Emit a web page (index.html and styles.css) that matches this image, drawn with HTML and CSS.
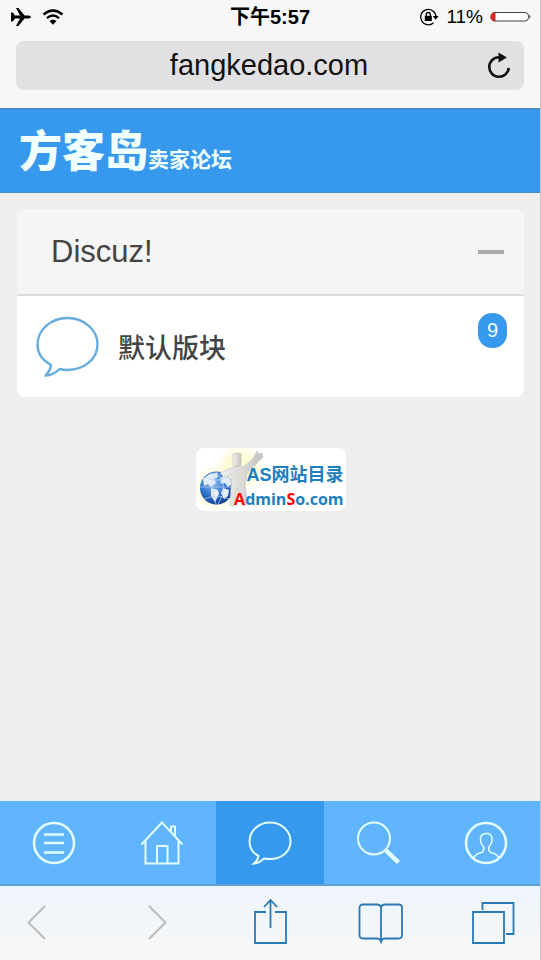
FILE: index.html
```html
<!DOCTYPE html>
<html lang="zh-CN">
<head>
    <meta charset="UTF-8">
    <meta name="viewport" content="width=device-width, initial-scale=1.0">
    <title>方客岛 卖家论坛</title>
    <link rel="stylesheet" href="styles.css">
</head>
<body>
    <div class="browser-top">
        <div class="status-bar">
            <div class="status-left">
                <svg width="22" height="20" viewBox="0 0 22 20" aria-hidden="true">
                    <path d="M1 5.500h1.800L5 8.400h5L6 1h2.400l6.200 7.400H19q4 1.600 0 3.200h-4.400L8.400 19H6l4-7.400H5l-2.200 2.900H1z"/>
                </svg>
                <svg width="22" height="18" viewBox="0 0 22 18" fill="none" stroke="#000" stroke-width="2.400" aria-hidden="true">
                    <path d="M1.500 6.500Q11-1.500 20.500 6.500M5 10.200Q11 5 17 10.200"/>
                    <path d="M7.500 13Q11 9.800 14.500 13L11 16.800z" fill="#000" stroke="none"/>
                </svg>
            </div>
            <div class="status-time">下午5:57</div>
            <div class="status-right">
                <svg width="20" height="20" viewBox="0 0 20 20" fill="none" stroke="#000" stroke-width="1.300" aria-hidden="true">
                    <path d="M14.500 15.800A7.700 7.700 0 1 1 17 10"/>
                    <path d="M13.800 9h5.800l-2.900 3.800z" fill="#000" stroke="none"/>
                    <rect x="5.800" y="8.800" width="7" height="5.200" fill="#000" stroke="none"/>
                    <path d="M7.300 9V7.500a2 2 0 0 1 4 0V9"/>
                </svg>
                <span class="battery-text">11%</span>
                <svg width="42" height="12" viewBox="0 0 42 12" aria-hidden="true">
                    <rect x="1.500" y="1.500" width="37" height="8.500" rx="3.500" fill="#fff" stroke="#444"/>
                    <path d="M5 1.500a3.500 3.500 0 0 0 0 8.500z" fill="#e3281e" stroke="#a33"/>
                    <path d="M39.500 3.500q2 2.200 0 4.500z" fill="#333"/>
                </svg>
            </div>
        </div>
        <div class="address-bar">
            <input class="address-input" type="text" value="fangkedao.com" aria-label="地址">
            <button class="reload-btn" aria-label="刷新">
                <svg width="26" height="28" viewBox="0 0 26 28" fill="none" stroke="#111" stroke-width="2.600" aria-hidden="true">
                    <path d="M14 5.200h-1A9.800 9.800 0 1 0 22.800 16"/>
                    <path d="M12.500.500l8.500 5-8.500 5z" fill="#111" stroke="none"/>
                </svg>
            </button>
        </div>
    </div>

    <header class="header">
        <a class="logo" href="#"><span class="logo-name">方客岛</span><span class="logo-sub">卖家论坛</span></a>
    </header>

    <main class="content">
        <section class="forum">
            <div class="forum-header">
                <h2>Discuz!</h2>
                <button class="toggle-btn" aria-label="收起"></button>
            </div>
            <a class="forum-row" href="#">
                <svg class="forum-icon" width="64" height="62" viewBox="0 0 64 62" fill="none" stroke="#65addf" stroke-width="2.400" stroke-linejoin="round" aria-hidden="true">
                    <path d="M15 49C6 44 1.500 37 1.500 29 1.500 14 14.500 2 31.500 2S61.500 14 61.500 28.500 48 54 31.500 54q-4 0-8-1c-4 4-8 6.500-14 6.500 3.500-3.500 5-6.500 5.500-10.500z"/>
                </svg>
                <span class="forum-name">默认版块</span>
                <span class="badge">9</span>
            </a>
        </section>

        <div class="site-mark">
            <svg class="mark-art" width="74" height="63" viewBox="0 0 74 63" aria-hidden="true">
                <defs>
                    <radialGradient id="globe" cx="40%" cy="32%" r="70%">
                        <stop offset="0" stop-color="#8ebcf2"/>
                        <stop offset=".6" stop-color="#2e6fca"/>
                        <stop offset="1" stop-color="#123e91"/>
                    </radialGradient>
                    <radialGradient id="glow">
                        <stop offset=".6" stop-color="#fdfad6"/>
                        <stop offset="1" stop-color="#fdfad6" stop-opacity="0"/>
                    </radialGradient>
                    <linearGradient id="figure">
                        <stop offset="0" stop-color="#f3f1ee"/>
                        <stop offset="1" stop-color="#c4c2be"/>
                    </linearGradient>
                </defs>
                <ellipse cx="20" cy="40" rx="22" ry="24" fill="url(#glow)"/>
                <ellipse cx="44" cy="21" rx="25" ry="24" fill="url(#glow)"/>
                <circle cx="20.500" cy="40" r="16.500" fill="url(#globe)"/>
                <path d="M7 31q7-7 14-6l1 4-4 2 2 4-5 4-3-3-4 2zM15 40l7 2 1 4-4 8-4-6zM26 25q8 2 10 11l-4 3-3-4-4 1-1-5 3-3zM27 40l6 2-1 6-4 3-3-6z" fill="#e4eef9"/>
                <path d="M4 39h33M20 24q-7 15 0 32M21 24q13 15 1 32M8 29q13 6 25 0M8 51q13-5 25 0" fill="none" stroke="#bad5f1" stroke-width=".7"/>
                <path d="M37 19q6-2 10 0l9-7 3-5 2-4 1 3 4-1 1 4-4 4-12 12-2 12 3 19-5 2-6-18-3 18h-4l1-19 1-13q-5 4-9 2l-3-3z" fill="url(#figure)" stroke="#c5c3bf" stroke-width=".6"/>
                <path d="M37 6q4-2 8 0v11q-4 2-8 0z" fill="url(#figure)" stroke="#bbb9b5" stroke-width=".6"/>
            </svg>
            <div class="mark-text">
                <p class="mark-title">AS网站目录</p>
                <p class="mark-domain"><em>A</em>dmin<em>S</em>o.com</p>
            </div>
        </div>
    </main>

    <nav class="tab-bar">
        <a class="tab" href="#" aria-label="菜单">
            <svg width="44" height="44" viewBox="0 0 44 44" aria-hidden="true">
                <circle cx="22" cy="22" r="20" stroke-width="2.600"/>
                <path d="M12 13.500h20M12 22h20M12 31.500h20" stroke-width="2.400"/>
            </svg>
        </a>
        <a class="tab" href="#" aria-label="首页">
            <svg width="44" height="44" viewBox="0 0 44 44" aria-hidden="true">
                <path d="M1.500 23.500L22 1.500l20.500 22M5.500 20v22.500h33V20M17 42V25h10.500v17M31 10V5.500h4V14.500"/>
            </svg>
        </a>
        <a class="tab active" href="#" aria-label="论坛">
            <svg width="44" height="44" viewBox="0 0 44 44" aria-hidden="true">
                <path d="M10.500 35C4 31.500 1.500 26 1.500 20.500 1.500 10 10.500 1.500 22 1.500s20.500 8.500 20.500 19S33 38 22 38q-3 0-6-.5c-3 3-5.500 4.500-10 5 3-2.500 4-4.500 4.500-7.500z"/>
            </svg>
        </a>
        <a class="tab" href="#" aria-label="搜索">
            <svg width="44" height="44" viewBox="0 0 44 44" aria-hidden="true">
                <circle cx="18" cy="17.500" r="16"/>
                <path d="M29 28.500L42.500 41.500" stroke-width="4.500"/>
            </svg>
        </a>
        <a class="tab" href="#" aria-label="我的">
            <svg width="44" height="44" viewBox="0 0 44 44" aria-hidden="true">
                <circle cx="22" cy="22" r="20" stroke-width="2.600"/>
                <path stroke-width="1.600" d="M9.500 37q2-4 8-5.500 3-1 2-5.500-2.500-2.500-3-6.500-1-6.500 5.500-7t6 7q-.5 4-3 6.500-1 4.500 2 5.500 6 1.500 8 5.500"/>
            </svg>
        </a>
    </nav>

    <div class="browser-bottom">
        <button class="tool" aria-label="后退" disabled>
            <svg width="46" height="46" viewBox="0 0 46 46" aria-hidden="true">
                <path d="M27 6L10.500 22.500 27 39" stroke-width="2"/>
            </svg>
        </button>
        <button class="tool" aria-label="前进" disabled>
            <svg width="46" height="46" viewBox="0 0 46 46" aria-hidden="true">
                <path d="M18 6l16.500 16.500L18 39" stroke-width="2"/>
            </svg>
        </button>
        <button class="tool" aria-label="分享">
            <svg width="46" height="46" viewBox="0 0 46 46" aria-hidden="true">
                <path d="M22 12H11v31h31V12H31M26.500 28V0M20 7l6.500-7L33 7"/>
            </svg>
        </button>
        <button class="tool" aria-label="书签">
            <svg width="46" height="46" viewBox="0 0 46 46" aria-hidden="true">
                <path d="M24 7q-1-2.500-4-2.500H6Q2.500 4.500 2.500 8v27q0 3.500 3.500 3.500h14q3 0 4 3 1-3 4-3h13.500q3.500 0 3.500-3.500V8q0-3.500-3.500-3.500H28Q25 4.500 24 7zv36"/>
            </svg>
        </button>
        <button class="tool" aria-label="标签页">
            <svg width="46" height="46" viewBox="0 0 46 46" aria-hidden="true">
                <path d="M3 12h31v31H3zM12.500 10V3h31v31H36"/>
            </svg>
        </button>
    </div>
</body>
</html>
```
FILE: styles.css
```css
* {
    box-sizing: border-box;
    margin: 0;
    padding: 0;
}

body {
    display: flex;
    flex-direction: column;
    min-height: 100vh;
    font-family: "Liberation Sans", "Noto Sans CJK SC", sans-serif;
    color: #444;
    background: #eee;
    border-right: 1px solid #c4c4c6;
}

a {
    color: inherit;
    text-decoration: none;
}

button {
    border: none;
    background: none;
    cursor: pointer;
}

svg {
    display: block;
}

/* browser chrome */
.browser-top {
    padding: 0 16px 18px;
    background: #f7f7f7;
}

.status-bar {
    display: grid;
    grid-template-columns: 1fr auto 1fr;
    align-items: center;
    height: 34px;
    margin: 0 -8px 7px;
    color: #000;
}

.status-left,
.status-right {
    display: flex;
    align-items: center;
}

.status-left {
    gap: 10px;
    padding-left: 2px;
}

.status-right {
    justify-content: flex-end;
    gap: 7px;
}

.status-time {
    font-size: 20px;
    font-weight: bold;
    line-height: 34px;
}

.battery-text {
    font-size: 19px;
    line-height: 34px;
}

.address-bar {
    display: flex;
    align-items: center;
    height: 49px;
    padding: 0 12px;
    background: #e1e1e4;
    border-radius: 8px;
}

.address-input {
    flex: 1;
    min-width: 0;
    height: 49px;
    padding-left: 24px;
    border: none;
    outline: none;
    background: none;
    font-family: inherit;
    font-size: 29px;
    text-align: center;
    color: #111;
}

/* site header */
.header {
    height: 85px;
    padding: 0 19px;
    background: #3699ed;
    border-top: 2px solid #458dc6;
    border-bottom: 1px solid #458dc6;
}

.logo {
    display: flex;
    align-items: baseline;
    font-family: "Noto Sans CJK SC", sans-serif;
    font-weight: 900;
    line-height: 76px;
    color: #f0ffff;
}

.logo-name {
    font-size: 43px;
}

.logo-sub {
    font-size: 21px;
    font-weight: bold;
}

/* forum list */
.content {
    flex: 1;
    padding: 16px 16px 16px 17px;
}

.forum {
    overflow: hidden;
    border-radius: 8px;
    background: #fff;
}

.forum-header {
    display: flex;
    align-items: center;
    justify-content: space-between;
    height: 87px;
    padding: 0 20px 0 34px;
    background: #f5f5f5;
    border-bottom: 2px solid #dcdcdc;
}

.forum-header h2 {
    font-size: 31px;
    font-weight: normal;
}

.toggle-btn {
    width: 26px;
    height: 4px;
    background: #aaa;
}

.forum-row {
    display: flex;
    align-items: center;
    height: 101px;
    padding: 0 17px 0 19px;
}

.forum-name {
    flex: 1;
    padding-left: 18px;
    font-size: 27px;
    font-weight: 500;
}

.badge {
    align-self: flex-start;
    width: 29px;
    margin-top: 17px;
    border-radius: 14px;
    background: #3699ed;
    font-size: 20px;
    line-height: 35px;
    text-align: center;
    color: #f0ffff;
}

.site-mark {
    position: relative;
    width: 150px;
    height: 63px;
    margin: 51px auto 0;
    overflow: hidden;
    border-radius: 8px;
    background: #fff;
}

.mark-art {
    position: absolute;
    top: 0;
    left: 0;
}

.mark-text {
    position: relative;
    padding: 15px 2px 0 0;
    font-weight: bold;
    line-height: 24px;
    text-align: right;
    white-space: nowrap;
    color: #1b80bd;
}

.mark-title {
    font-family: "Liberation Sans", "Noto Sans CJK SC", sans-serif;
    font-size: 18px;
}

.mark-domain {
    font-family: "Open Sans", sans-serif;
    font-size: 16px;
}

.mark-domain em {
    font-style: normal;
    color: #f00;
}

/* bottom navigation */
.tab-bar {
    display: flex;
    height: 85px;
    background: #60b5fe;
    border-bottom: 2px solid #5c9fd9;
}

.tab {
    display: flex;
    flex: 1;
    align-items: center;
    justify-content: center;
}

.tab.active {
    background: #3699ed;
}

.tab svg {
    fill: none;
    stroke: #e2ffff;
    stroke-width: 2;
}

.browser-bottom {
    display: flex;
    align-items: center;
    justify-content: space-between;
    height: 74px;
    padding: 0 24px 0 18px;
    background: linear-gradient(#eef5fb, #f7f7f7);
}

.tool svg {
    overflow: visible;
    fill: none;
    stroke: #2879b5;
    stroke-width: 1.8;
}

.tool:disabled svg {
    stroke: #bcbcbc;
}
```
